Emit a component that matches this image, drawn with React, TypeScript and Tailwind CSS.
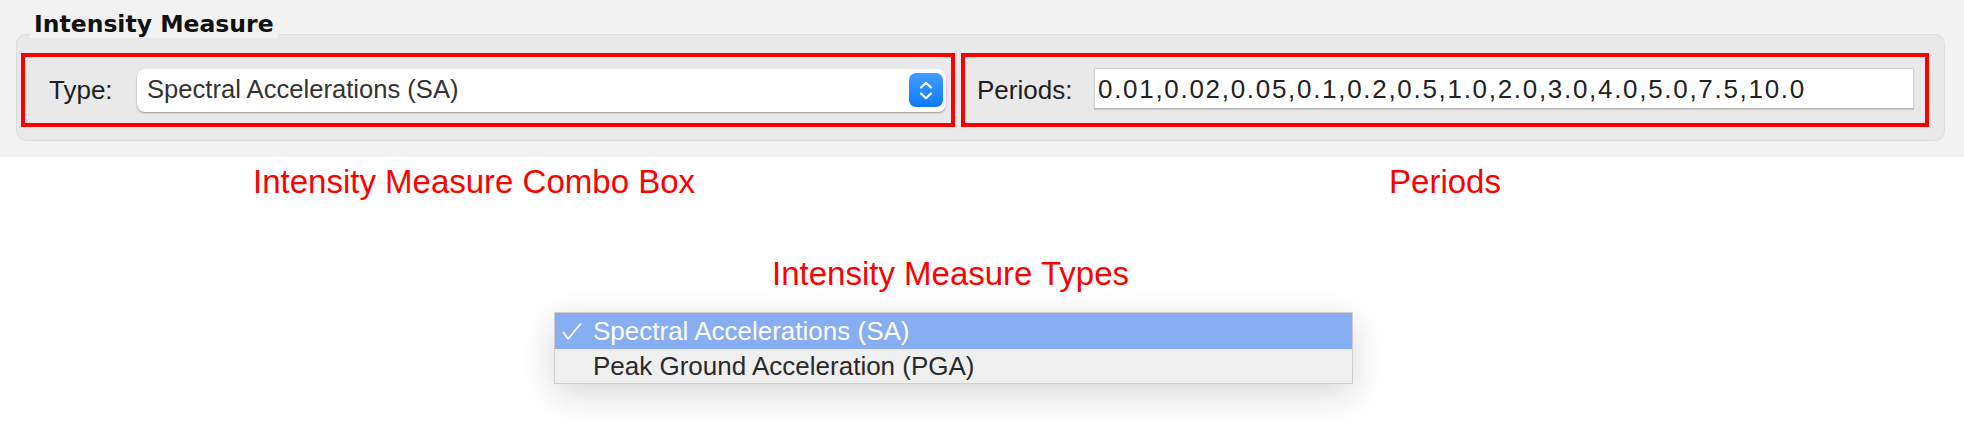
import { Fragment } from 'react'

const PERIODS = '0.01,0.02,0.05,0.1,0.2,0.5,1.0,2.0,3.0,4.0,5.0,7.5,10.0'

const IM_TYPES = [
  { label: 'Spectral Accelerations (SA)', selected: true },
  { label: 'Peak Ground Acceleration (PGA)', selected: false },
]

function Stepper() {
  return (
    <div className="flex h-[34px] w-[34px] flex-col items-center justify-center gap-[3px] rounded-[7px] bg-linear-to-b from-[#3d9dff] to-[#0a7aff]">
      <svg width="14" height="8" viewBox="0 0 14 8" fill="none">
        <path d="M2 6.5 L7 1.8 L12 6.5" stroke="white" strokeWidth="2.2" strokeLinecap="round" strokeLinejoin="round" />
      </svg>
      <svg width="14" height="8" viewBox="0 0 14 8" fill="none">
        <path d="M2 1.5 L7 6.2 L12 1.5" stroke="white" strokeWidth="2.2" strokeLinecap="round" strokeLinejoin="round" />
      </svg>
    </div>
  )
}

function Check() {
  return (
    <svg width="20" height="17" viewBox="0 0 20 17" fill="none">
      <path d="M1.5 9.5 L6 16 L18.5 1" stroke="white" strokeWidth="1.8" strokeLinecap="round" strokeLinejoin="round" />
    </svg>
  )
}

export default function App() {
  return (
    <div className="h-[441px] w-[1964px] overflow-hidden bg-white font-['Liberation_Sans',Arial,sans-serif]">
      {/* Qt group box */}
      <div className="h-[157px] bg-[#f2f2f2] pl-[16px] pt-[11px]">
        <div className="relative z-10 ml-[14px] inline-block bg-[#f2f2f2] px-[4px] font-['DejaVu_Sans',sans-serif] text-[23.5px] font-bold leading-[27px] text-[#111]">
          Intensity Measure
        </div>
        <div className="-mt-[5px] flex h-[107px] w-[1929px] gap-[6px] rounded-[10px] border border-[#dddddd] bg-[#e9e9e9] pl-[4px] pt-[18px]">
          {/* combo box */}
          <div className="flex h-[74px] w-[934px] items-center border-4 border-[#ff0000] pl-[24px] pr-[5px]">
            <span className="w-[88px] text-[26px] leading-none text-[#1e1e1e]">Type:</span>
            <div className="flex h-[43px] flex-1 items-center justify-between rounded-[8px] bg-white pl-[10px] pr-[3px] shadow-[0_1px_2px_rgba(0,0,0,0.35)]">
              <span className="text-[25.6px] leading-none text-[#333]">Spectral Accelerations (SA)</span>
              <Stepper />
            </div>
          </div>
          {/* periods */}
          <div className="flex h-[74px] w-[968px] items-center border-4 border-[#ff0000] pl-[12px] pr-[11px]">
            <span className="w-[117px] text-[26px] leading-none text-[#1e1e1e]">Periods:</span>
            <div className="mb-[3px] flex h-[41px] flex-1 items-center border border-[#d2d2d2] border-b-[#b5b5b5] bg-white pl-[3px] shadow-[0_1px_1px_rgba(0,0,0,0.12)]">
              <span className="text-[26px] leading-none tracking-[1.7px] text-[#222]">{PERIODS}</span>
            </div>
          </div>
        </div>
      </div>

      {/* annotations */}
      <div className="flex pt-[8px] text-[33px] leading-[33px] text-[#ff0000]">
        <div className="w-[961px] pl-[253px]">Intensity Measure Combo Box</div>
        <div className="w-[968px] text-center">Periods</div>
      </div>
      <div className="mt-[59px] pl-[772px] text-[33px] leading-[33px] text-[#ff0000]">Intensity Measure Types</div>

      {/* popup list */}
      <div className="ml-[554px] mt-[22px] w-[799px] border border-[#cdcdcd] bg-[#efefef] shadow-[0_10px_34px_rgba(0,0,0,0.16)]">
        {IM_TYPES.map((t) => (
          <Fragment key={t.label}>
            {t.selected ? (
              <div className="flex h-[36px] items-center bg-[#87aef2] pl-[7px] text-[26px] leading-[36px] text-white">
                <span className="w-[31px]">
                  <Check />
                </span>
                {t.label}
              </div>
            ) : (
              <div className="flex h-[34px] items-center pl-[38px] text-[26px] leading-[34px] text-[#2a2a2a]">{t.label}</div>
            )}
          </Fragment>
        ))}
      </div>
    </div>
  )
}
